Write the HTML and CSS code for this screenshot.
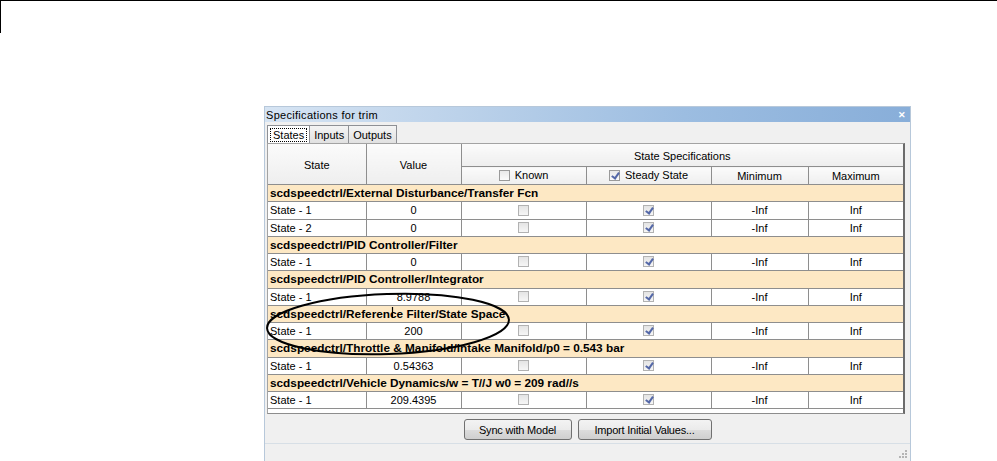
FILE: index.html
```html
<!DOCTYPE html>
<html>
<head>
<meta charset="utf-8">
<link rel="stylesheet" href="styles.css">
</head>
<body>
<div class="corner"></div>
<div class="dialog">
  <div class="titlebar">
    <span class="title">Specifications for trim</span>
    <span class="close">✕</span>
  </div>
  <div class="tabs">
    <div class="tab active"><span class="focus">States</span></div>
    <div class="tab">Inputs</div>
    <div class="tab">Outputs</div>
  </div>
  <div class="pane">
    <table class="grid">
      <colgroup>
        <col class="c-state"><col class="c-value"><col class="c-known"><col class="c-steady"><col class="c-min"><col class="c-max">
      </colgroup>
      <thead>
        <tr class="h1">
          <th rowspan="2">State</th>
          <th rowspan="2">Value</th>
          <th colspan="4">State Specifications</th>
        </tr>
        <tr class="h2">
          <th><span class="cb hdr"></span> Known</th>
          <th><span class="cb hdr on"></span> Steady State</th>
          <th>Minimum</th>
          <th>Maximum</th>
        </tr>
      </thead>
      <tbody>
        <tr class="grp"><td colspan="6">scdspeedctrl/External Disturbance/Transfer Fcn</td></tr>
        <tr class="row"><td class="name">State - 1</td><td>0</td><td><span class="cb"></span></td><td><span class="cb on"></span></td><td>-Inf</td><td>Inf</td></tr>
        <tr class="row"><td class="name">State - 2</td><td>0</td><td><span class="cb"></span></td><td><span class="cb on"></span></td><td>-Inf</td><td>Inf</td></tr>
        <tr class="grp"><td colspan="6">scdspeedctrl/PID Controller/Filter</td></tr>
        <tr class="row"><td class="name">State - 1</td><td>0</td><td><span class="cb"></span></td><td><span class="cb on"></span></td><td>-Inf</td><td>Inf</td></tr>
        <tr class="grp"><td colspan="6">scdspeedctrl/PID Controller/Integrator</td></tr>
        <tr class="row"><td class="name">State - 1</td><td>8.9788</td><td><span class="cb"></span></td><td><span class="cb on"></span></td><td>-Inf</td><td>Inf</td></tr>
        <tr class="grp"><td colspan="6">scdspeedctrl/Reference Filter/State Space</td></tr>
        <tr class="row"><td class="name">State - 1</td><td>200</td><td><span class="cb"></span></td><td><span class="cb on"></span></td><td>-Inf</td><td>Inf</td></tr>
        <tr class="grp"><td colspan="6">scdspeedctrl/Throttle &amp; Manifold/Intake Manifold/p0 = 0.543 bar</td></tr>
        <tr class="row"><td class="name">State - 1</td><td>0.54363</td><td><span class="cb"></span></td><td><span class="cb on"></span></td><td>-Inf</td><td>Inf</td></tr>
        <tr class="grp"><td colspan="6">scdspeedctrl/Vehicle Dynamics/w = T//J w0 = 209 rad//s</td></tr>
        <tr class="row"><td class="name">State - 1</td><td>209.4395</td><td><span class="cb"></span></td><td><span class="cb on"></span></td><td>-Inf</td><td>Inf</td></tr>
      </tbody>
    </table>
  </div>
  <div class="buttons">
    <button class="btn">Sync with Model</button>
    <button class="btn">Import Initial Values...</button>
  </div>
  <div class="status">
    <svg class="grip" width="10" height="10" viewBox="0 0 10 10">
      <rect x="8" y="2" width="2" height="2" fill="#b4b4b4"/>
      <rect x="5" y="5" width="2" height="2" fill="#b4b4b4"/>
      <rect x="8" y="5" width="2" height="2" fill="#b4b4b4"/>
      <rect x="2" y="8" width="2" height="2" fill="#b4b4b4"/>
      <rect x="5" y="8" width="2" height="2" fill="#b4b4b4"/>
      <rect x="8" y="8" width="2" height="2" fill="#b4b4b4"/>
    </svg>
  </div>
</div>
<svg class="annot" width="997" height="461" viewBox="0 0 997 461">
  <ellipse cx="388" cy="324" rx="121" ry="30" fill="none" stroke="#000" stroke-width="2" transform="rotate(-2 388 324)"/>
  <line x1="392.5" y1="307" x2="392.5" y2="318" stroke="#000" stroke-width="1.2"/>
</svg>
</body>
</html>
```

FILE: styles.css
```css
html, body {
  margin: 0;
  padding: 0;
  background: #fff;
}
body {
  position: relative;
  width: 997px;
  height: 461px;
  overflow: hidden;
  font-family: "Liberation Sans", Arial, sans-serif;
  font-size: 11px;
  color: #000;
}
.corner {
  height: 32px;
  border-top: 1px solid #000;
  border-left: 1px solid #000;
}
.dialog {
  margin: 73px 0 0 264px;
  width: 645px;
  border: 1px solid #b7c8da;
  border-bottom: none;
  background: #f0f0f0;
  height: 360px;
}
.titlebar {
  height: 15px;
  display: flex;
  align-items: center;
  justify-content: space-between;
  padding: 0 4px 0 1px;
  background: linear-gradient(to right, #d6e4f3 0%, #bcd2ea 30%, #9cbde1 65%, #88aed9 100%);
}
.title {
  font-size: 11px;
  letter-spacing: 0.3px;
}
.close {
  color: #fff;
  font-size: 9px;
  font-weight: bold;
}
.tabs {
  display: flex;
  margin: 3px 0 0 2px;
  height: 18px;
}
.tab {
  border: 1px solid #8e9095;
  border-bottom: none;
  margin-right: -1px;
  padding: 2px 4px 0;
  background: linear-gradient(#f4f4f4, #e1e1e1);
  line-height: 14px;
}
.tab.active {
  background: #fff;
  padding: 2px 2px 0;
}
.focus {
  border: 1px dotted #000;
  padding: 0 2px;
  display: inline-block;
  line-height: 12px;
}
.pane {
  margin: 0 5px 0 2px;
  border: 1px solid #a3a3a3;
  border-right: 2px solid #6b6b6b;
  background: #fff;
  padding-bottom: 4px;
  border-bottom: 1px solid #8d8d8d;
}
.grid {
  width: 100%;
  border-collapse: collapse;
  table-layout: fixed;
}
.c-state { width: 98px; }
.c-value { width: 95px; }
.c-known { width: 125px; }
.c-steady { width: 125px; }
.c-min { width: 97px; }
.c-max { width: auto; }
.grid th {
  font-weight: normal;
  background: linear-gradient(#fbfbfb, #eeeeee);
  border: 1px solid #8e8e8e;
  padding: 0;
  text-align: center;
}
.grid tr.h1 th { height: 20px; border-top: none; padding-top: 2px; }
.grid tr.h2 th { height: 17px; }
.grid th:first-child { border-left: none; }
.grid tr.h2 th:last-child, .grid tr.h1 th:last-child { border-right: none; }
.grid td {
  border: 1px solid #8e8e8e;
  padding: 0;
  height: 16.25px;
  text-align: center;
  white-space: nowrap;
  overflow: visible;
}
.grid td:first-child { border-left: none; }
.grid td:last-child { border-right: none; }
.grp td {
  background: #fde8c4;
  font-weight: bold;
  font-size: 11.8px;
  text-align: left;
  padding-left: 2px;
}
.row td.name {
  text-align: left;
  padding-left: 2px;
}
.cb {
  display: inline-block;
  width: 11px;
  height: 11px;
  box-sizing: border-box;
  border: 1px solid #b2b2b2;
  background: linear-gradient(#e4e4e4, #f6f6f6);
  vertical-align: middle;
  position: relative;
  top: -1px;
}
.cb.hdr {
  border-color: #9a9a9a;
  background: linear-gradient(#e9e9e9, #fbfbfb);
  margin-right: 2px;
}
.cb.on::after {
  content: "";
  position: absolute;
  left: 3px;
  top: 0px;
  width: 3px;
  height: 6px;
  border: solid #5468a8;
  border-width: 0 2px 2px 0;
  transform: rotate(35deg);
}
.buttons {
  display: flex;
  justify-content: center;
  gap: 6px;
  padding: 5px 0 0;
  height: 30px;
  box-sizing: border-box;
  border-bottom: 1px solid #d7dfe6;
}
.btn {
  height: 21px;
  font-family: "Liberation Sans", Arial, sans-serif;
  font-size: 11px;
  color: #000;
  border: 1px solid #707070;
  border-radius: 3px;
  background: linear-gradient(#f3f3f3 0%, #ebebeb 50%, #dddddd 51%, #cfcfcf 100%);
  padding: 0 10px;
  letter-spacing: -0.2px;
}
.btn:first-child { width: 108px; }
.btn:last-child { width: 134px; }
.status {
  height: 14px;
  display: flex;
  justify-content: flex-end;
  align-items: flex-end;
  padding-right: 3px;
}
.grip { display: block; }
.annot {
  position: absolute;
  left: 0;
  top: 0;
  pointer-events: none;
}
```
